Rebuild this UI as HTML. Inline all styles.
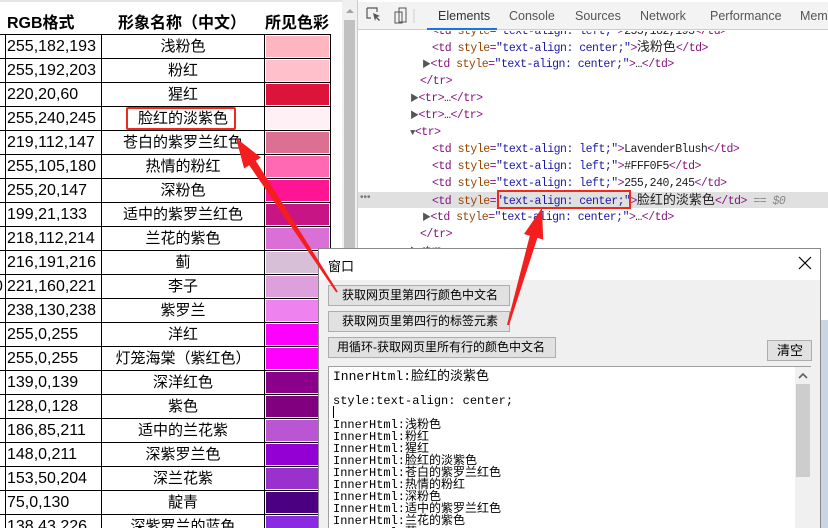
<!DOCTYPE html>
<html style="overflow:hidden;height:528px"><head><meta charset="utf-8"><style>
*{margin:0;padding:0;box-sizing:border-box}
body{width:828px;height:528px;overflow:hidden;background:#fff;position:relative;font-family:"Liberation Sans","Noto Sans CJK SC",sans-serif}
.a{position:absolute}
.hd{font-weight:bold;font-size:16px;color:#000;top:9px}
.cell{position:absolute;font-size:16px;color:#000;height:24px;line-height:24px;white-space:nowrap}
.cn{font-size:15px}
.code{position:absolute;font-family:"Liberation Mono","Noto Sans CJK SC",monospace;font-size:11.5px;letter-spacing:-0.5px;color:#881280;white-space:nowrap;line-height:17px}
.at{color:#994500}.v{color:#1a1aa6}.t{color:#222}
.t.c{font-size:13px;letter-spacing:0}
.btn{position:absolute;background:#e1e1e1;border:1px solid #adadad;font-size:12px;color:#000;line-height:19px;padding-left:12px;white-space:nowrap;overflow:hidden}
.mono{font-family:"Liberation Mono","Noto Sans CJK SC",monospace;font-size:12px;line-height:12px;color:#000;white-space:nowrap}
</style></head><body>
<div class="a" style="left:0;top:0;width:342px;height:2px;background:#e6e6e6"></div>
<div class="a hd" style="left:7px">RGB格式</div>
<div class="a hd" style="left:118px">形象名称（中文）</div>
<div class="a hd" style="left:265px">所见色彩</div>
<div id="tbl"></div>
<div class="a" style="left:342px;top:0;width:15px;height:528px;background:#f0f0f0"></div>
<div class="a" style="left:344px;top:20px;width:11px;height:508px;background:#c1c1c1"></div>
<div class="a" style="left:346px;top:9px;width:0;height:0;border-left:4px solid transparent;border-right:4px solid transparent;border-bottom:4px solid #a3a3a3"></div>
<div class="a" style="left:357px;top:0;width:471px;height:528px;background:#fff;border-left:1px solid #ccc"></div>
<div class="a" style="left:358px;top:2px;width:470px;height:28px;background:#f3f3f3;border-bottom:1px solid #ccc"></div>
<svg class="a" style="left:366px;top:7px" width="50" height="18"><path d="M1 1h10v4M1 1v10h4" fill="none" stroke="#555" stroke-width="1.2"/><path d="M7 6l7 3-3 1 3 3-1 1-3-3-1 3z" fill="#555"/><rect x="29" y="5" width="7" height="11" fill="none" stroke="#555"/><rect x="33" y="1" width="7" height="14" fill="none" stroke="#555"/><line x1="48" y1="2" x2="48" y2="16" stroke="#ccc"/></svg>
<div class="a" style="left:438px;top:9px;font-size:12.5px;color:#333">Elements</div>
<div class="a" style="left:427px;top:28px;width:70px;height:2px;background:#1a73e8"></div>
<div class="a" style="left:509px;top:9px;font-size:12.5px;color:#555">Console</div>
<div class="a" style="left:575px;top:9px;font-size:12.5px;color:#555">Sources</div>
<div class="a" style="left:640px;top:9px;font-size:12.5px;color:#555">Network</div>
<div class="a" style="left:710px;top:9px;font-size:12.5px;color:#555">Performance</div>
<div class="a" style="left:800px;top:9px;font-size:12.5px;color:#555">Memo</div>
<div class="a" style="left:358px;top:192px;width:470px;height:16px;background:#e0e0e0"></div>
<div class="a" style="left:360px;top:192px;font-size:10px;color:#777">•••</div>
<div style="position:absolute;left:0;top:31px;width:828px;height:230px;overflow:hidden">
<div class="code" style="left:432px;top:-8px">&lt;td <span class="at">style</span>=<span class="v">"text-align: left;"</span>&gt;<span class="t">255,182,193</span>&lt;/td&gt;</div>
<div class="code" style="left:432px;top:8px">&lt;td <span class="at">style</span>=<span class="v">"text-align: center;"</span>&gt;<span class="t c">浅粉色</span>&lt;/td&gt;</div>
<div class="code" style="left:422px;top:25px"><span style="color:#555;font-size:9px">▶</span>&lt;td <span class="at">style</span>=<span class="v">"text-align: center;"</span>&gt;<span class="t">…</span>&lt;/td&gt;</div>
<div class="code" style="left:420px;top:42px">&lt;/tr&gt;</div>
<div class="code" style="left:410px;top:59px"><span style="color:#555;font-size:9px">▶</span>&lt;tr&gt;<span class="t">…</span>&lt;/tr&gt;</div>
<div class="code" style="left:410px;top:76px"><span style="color:#555;font-size:9px">▶</span>&lt;tr&gt;<span class="t">…</span>&lt;/tr&gt;</div>
<div class="code" style="left:410px;top:93px"><span style="color:#555;font-size:9px">▼</span>&lt;tr&gt;</div>
<div class="code" style="left:432px;top:110px">&lt;td <span class="at">style</span>=<span class="v">"text-align: left;"</span>&gt;<span class="t">LavenderBlush</span>&lt;/td&gt;</div>
<div class="code" style="left:432px;top:127px">&lt;td <span class="at">style</span>=<span class="v">"text-align: left;"</span>&gt;<span class="t">#FFF0F5</span>&lt;/td&gt;</div>
<div class="code" style="left:432px;top:144px">&lt;td <span class="at">style</span>=<span class="v">"text-align: left;"</span>&gt;<span class="t">255,240,245</span>&lt;/td&gt;</div>
<div class="code" style="left:432px;top:161px">&lt;td <span class="at">style</span>=<span class="v">"text-align: center;"</span>&gt;<span class="t c">脸红的淡紫色</span>&lt;/td&gt; <span style="color:#888;font-style:italic">== $0</span></div>
<div class="code" style="left:422px;top:178px"><span style="color:#555;font-size:9px">▶</span>&lt;td <span class="at">style</span>=<span class="v">"text-align: center;"</span>&gt;<span class="t">…</span>&lt;/td&gt;</div>
<div class="code" style="left:420px;top:195px">&lt;/tr&gt;</div>
<div class="code" style="left:410px;top:212px"><span style="color:#555;font-size:9px">▶</span>&lt;tr&gt;…</div>
</div>
<div class="a" style="left:497px;top:190px;width:134px;height:19px;border:2px solid #f0281e"></div>
<div class="a" style="left:126px;top:107px;width:110px;height:23px;border:2px solid #f0281e;border-radius:2px"></div>
<div class="a" style="left:820px;top:320px;width:8px;height:208px;background:#c9d5e4"></div>
<div class="a" style="left:318px;top:248px;width:503px;height:280px;background:#f0f0f0;border:1px solid #888;border-bottom:none"></div>
<div class="a" style="left:319px;top:249px;width:501px;height:31px;background:#fff"></div>
<div class="a" style="left:328px;top:256px;font-size:13px;color:#000">窗口</div>
<svg class="a" style="left:798px;top:256px" width="14" height="14"><path d="M1 1L13 13M13 1L1 13" stroke="#000" stroke-width="1.2"/></svg>
<div class="btn" style="left:328px;top:285px;width:182px;height:21px;padding-left:13px">获取网页里第四行颜色中文名</div>
<div class="btn" style="left:328px;top:311px;width:182px;height:21px;padding-left:13px">获取网页里第四行的标签元素</div>
<div class="btn" style="left:328px;top:337px;width:228px;height:21px;padding-left:8px">用循环-获取网页里所有行的颜色中文名</div>
<div class="btn" style="left:767px;top:340px;width:45px;height:21px;padding-left:9px;font-size:13px">清空</div>
<div class="a" style="left:328px;top:366px;width:483px;height:162px;background:#fff;border:1px solid #a0a0a0;border-bottom:none;overflow:hidden">
<div class="a mono" style="left:4px;top:4px;font-size:13px">InnerHtml:脸红的淡紫色</div>
<div class="a mono" style="left:4px;top:28px">style:text-align: center;</div>
<div class="a" style="left:4px;top:39px;width:1px;height:12px;background:#000"></div>
<div class="a mono" style="left:4px;top:52px">InnerHtml:浅粉色<br>InnerHtml:粉红<br>InnerHtml:猩红<br>InnerHtml:脸红的淡紫色<br>InnerHtml:苍白的紫罗兰红色<br>InnerHtml:热情的粉红<br>InnerHtml:深粉色<br>InnerHtml:适中的紫罗兰红色<br>InnerHtml:兰花的紫色<br>InnerHtml:蓟</div>
</div>
<div class="a" style="left:795px;top:367px;width:16px;height:161px;background:#f0f0f0"></div>
<div class="a" style="left:796px;top:384px;width:14px;height:93px;background:#cdcdcd"></div>
<svg class="a" style="left:798px;top:372px" width="10" height="8"><path d="M1 6L5 2L9 6" fill="none" stroke="#606060" stroke-width="1.6"/></svg>
<svg class="a" style="left:0;top:0" width="828" height="528">
<polygon points="337.8,291.5 255.8,160.8 260.9,157.5 236,138 244.1,168.5 249.2,165.2 336.2,292.5" fill="#f41e1e"/>
<polygon points="509,325.3 537.4,237.9 543.2,239.6 542,208 524,234 529.8,235.7 507,324.7" fill="#f41e1e"/>
</svg>
<script>
var rows=[["255,182,193","浅粉色","#FFB6C1"],["255,192,203","粉红","#FFC0CB"],["220,20,60","猩红","#DC143C"],["255,240,245","脸红的淡紫色","#FFF0F5"],["219,112,147","苍白的紫罗兰红色","#DB7093"],["255,105,180","热情的粉红","#FF69B4"],["255,20,147","深粉色","#FF1493"],["199,21,133","适中的紫罗兰红色","#C71585"],["218,112,214","兰花的紫色","#DA70D6"],["216,191,216","蓟","#D8BFD8"],["221,160,221","李子","#DDA0DD"],["238,130,238","紫罗兰","#EE82EE"],["255,0,255","洋红","#FF00FF"],["255,0,255","灯笼海棠（紫红色）","#FF00FF"],["139,0,139","深洋红色","#8B008B"],["128,0,128","紫色","#800080"],["186,85,211","适中的兰花紫","#BA55D3"],["148,0,211","深紫罗兰色","#9400D3"],["153,50,204","深兰花紫","#9932CC"],["75,0,130","靛青","#4B0082"],["138,43,226","深紫罗兰的蓝色","#8A2BE2"]];
var h="";
for(var i=0;i<rows.length;i++){var y=34+24*i;var r=rows[i];var hh=Math.min(21,526-y);
h+='<div class="a" style="left:0;top:'+y+'px;width:331px;height:1px;background:#000"></div>';
h+='<div class="cell" style="left:7px;top:'+(y+1)+'px">'+r[0]+'</div>';
h+='<div class="cell cn" style="left:101px;width:164px;text-align:center;top:'+(y+1)+'px">'+r[1]+'</div>';
h+='<div class="a" style="left:266px;top:'+(y+2)+'px;width:63px;height:'+hh+'px;background:'+r[2]+'"></div>';}
h+='<div class="a" style="left:5px;top:34px;width:1px;height:494px;background:#000"></div>';
h+='<div class="a" style="left:101px;top:34px;width:1px;height:494px;background:#000"></div>';
h+='<div class="a" style="left:264px;top:34px;width:1px;height:494px;background:#000"></div>';
h+='<div class="a" style="left:330px;top:34px;width:1px;height:494px;background:#000"></div>';
h+='<div class="cell" style="left:-6px;top:275px">0</div>';
document.getElementById("tbl").innerHTML=h;
</script>
</body></html>
